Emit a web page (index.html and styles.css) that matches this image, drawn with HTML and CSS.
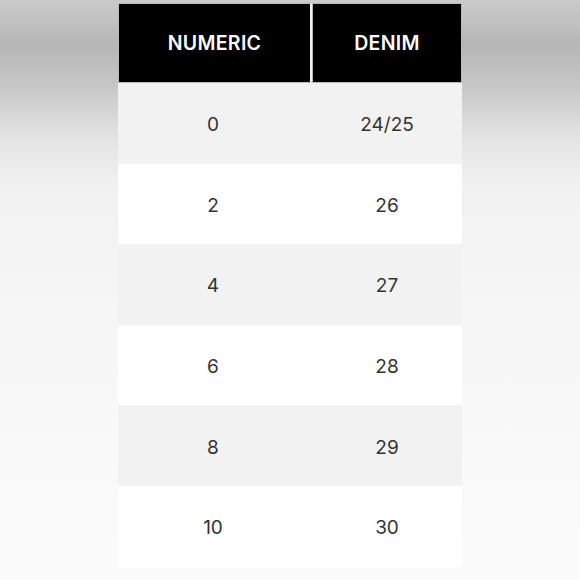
FILE: index.html
```html
<!DOCTYPE html>
<html>
<head>
<meta charset="utf-8">
<link rel="stylesheet" href="styles.css">
</head>
<body>
<div class="page">
  <table class="chart">
    <thead>
      <tr><th>NUMERIC</th><th>DENIM</th></tr>
    </thead>
    <tbody>
      <tr><td>0</td><td>24/25</td></tr>
      <tr><td>2</td><td>26</td></tr>
      <tr><td>4</td><td>27</td></tr>
      <tr><td>6</td><td>28</td></tr>
      <tr><td>8</td><td>29</td></tr>
      <tr><td>10</td><td>30</td></tr>
    </tbody>
  </table>
</div>
</body>
</html>
```
FILE: styles.css
```css
html, body {
  margin: 0;
  padding: 0;
}
body {
  width: 580px;
  height: 580px;
  overflow: hidden;
  background: linear-gradient(to bottom, #cbcbcb 0px, #b6b6b6 45px, #c6c6c6 85px, #e2e2e2 135px, #f1f1f1 185px, #f6f6f6 300px, #fbfbfb 580px);
  font-family: Inter, "Noto Sans", sans-serif;
}
.page {
  display: flex;
  justify-content: center;
  padding-top: 3px;
}
.chart {
  width: 344px;
  border-collapse: separate;
  border-spacing: 0;
}
.chart th {
  height: 78px;
  padding: 0;
  background: #000;
  color: #fff;
  font-size: 19.5px;
  font-weight: 600;
  letter-spacing: 0.3px;
  border: 1px solid #b8b8b8;
  text-align: center;
}
.chart th:first-child {
  width: 191px;
  border-right: 2px solid #f2f2f2;
}
.chart td {
  height: 80.6px;
  padding: 3px 0 0;
  box-sizing: border-box;
  text-align: center;
  font-size: 19px;
  color: #333;
  background: #fff;
}
.chart td:first-child {
  padding-right: 4px;
}
.chart tbody tr:nth-child(odd) td {
  background: #f2f2f2;
}
```
